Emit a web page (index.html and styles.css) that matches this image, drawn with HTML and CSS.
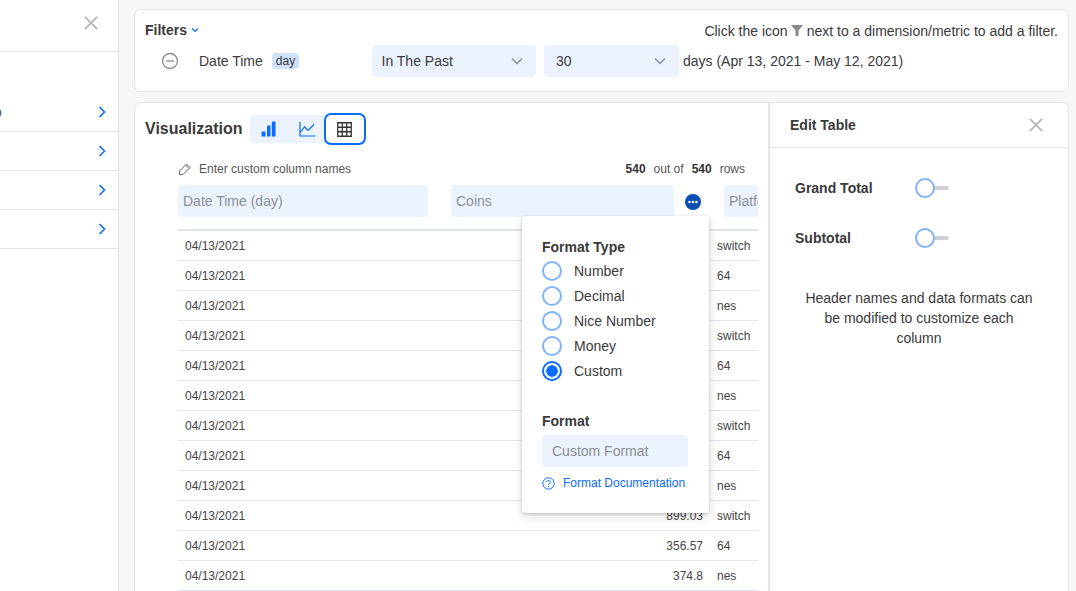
FILE: index.html
```html
<!DOCTYPE html>
<html lang="en">
<head>
<meta charset="utf-8">
<title>Edit Table</title>
<link rel="stylesheet" href="styles.css">
</head>
<body>
<div class="page">
  <aside class="side">
    <div class="side-head">
      <svg class="x-icon" width="14" height="14" viewBox="0 0 16 16"><path d="M1 1l14 14M15 1L1 15"/></svg>
    </div>
    <div class="side-row first"><span class="clip">o</span><svg class="chev" width="8" height="12" viewBox="0 0 8 12"><path d="M1.5 1l5 5-5 5"/></svg></div>
    <div class="side-row"><svg class="chev" width="8" height="12" viewBox="0 0 8 12"><path d="M1.5 1l5 5-5 5"/></svg></div>
    <div class="side-row"><svg class="chev" width="8" height="12" viewBox="0 0 8 12"><path d="M1.5 1l5 5-5 5"/></svg></div>
    <div class="side-row"><svg class="chev" width="8" height="12" viewBox="0 0 8 12"><path d="M1.5 1l5 5-5 5"/></svg></div>
  </aside>
  <main class="main">
    <section class="card filters">
      <div class="filters-top">
        <div class="filters-title">Filters <svg class="mini-chev" width="8" height="6" viewBox="0 0 8 6"><path d="M1 1.5l3 3 3-3"/></svg></div>
        <div class="hint">Click the icon <svg class="funnel" width="12" height="11" viewBox="0 0 12 11"><path d="M0 0h12L7.5 5.5V11h-3V5.500z"/></svg> next to a dimension/metric to add a filter.</div>
      </div>
      <div class="filter-row">
        <svg class="minus" width="18" height="18" viewBox="0 0 18 18"><circle cx="9" cy="9" r="7.500"/><path d="M5 9h8"/></svg>
        <span class="dim">Date Time</span>
        <span class="tag">day</span>
        <div class="select sel-a">In The Past<svg class="sel-chev" width="12" height="8" viewBox="0 0 12 8"><path d="M1 1.500l5 5 5-5"/></svg></div>
        <div class="select sel-b">30<svg class="sel-chev" width="12" height="8" viewBox="0 0 12 8"><path d="M1 1.500l5 5 5-5"/></svg></div>
        <span class="range">days (Apr 13, 2021 - May 12, 2021)</span>
      </div>
    </section>
    <section class="card viz">
      <div class="viz-left">
        <div class="viz-head">
          <h2 class="viz-title">Visualization</h2>
          <div class="type-group">
            <span class="type-btn">
              <svg width="16" height="16" viewBox="0 0 16 16"><path class="blue-fill" d="M.5 11.500a1 1 0 0 1 1-1h3v5h-4zM6 5.500a1 1 0 0 1 1-1h2.500v11H6zM10.800 1.500a1 1 0 0 1 1-1h2.700v15h-3.700z"/></svg>
            </span>
            <span class="type-btn">
              <svg width="17" height="16" viewBox="0 0 17 16"><path class="blue-line" d="M1 1v14h15.500M1.500 11l4-5 3.500 3.500 6-6"/></svg>
            </span>
            <span class="type-btn active">
              <svg width="15" height="15" viewBox="0 0 15 15"><path class="grid-line" d="M.75.75h13.500v13.500H.75zM5.250.75v13.500M9.750.75v13.500M.75 5.250h13.500M.75 9.750h13.500"/></svg>
            </span>
          </div>
        </div>
        <div class="table-area">
          <div class="meta">
            <svg class="pencil" width="14" height="14" viewBox="0 0 14 14"><path d="M1.500 9L8.500 2l3.500 3.500-7 7H1.500zM7.500 3l3.500 3.500"/></svg>
            <span class="meta-label">Enter custom column names</span>
            <span class="count"><b>540</b><span class="out">out of</span><b>540</b><span class="rows-label">rows</span></span>
          </div>
          <div class="col-heads">
            <div class="col-input col-date">Date Time (day)</div>
            <div class="col-input col-coins">Coins</div>
            <svg class="dots" width="16" height="16" viewBox="0 0 16 16"><circle class="dots-bg" cx="8" cy="8" r="8"/><circle class="dot" cx="4.500" cy="8" r="1.300"/><circle class="dot" cx="8" cy="8" r="1.300"/><circle class="dot" cx="11.500" cy="8" r="1.300"/></svg>
            <div class="col-input col-plat">Platform</div>
          </div>
          <div class="rows">
            <div class="row"><span>04/13/2021</span><span class="num"></span><span>switch</span></div>
            <div class="row"><span>04/13/2021</span><span class="num"></span><span>64</span></div>
            <div class="row"><span>04/13/2021</span><span class="num"></span><span>nes</span></div>
            <div class="row"><span>04/13/2021</span><span class="num"></span><span>switch</span></div>
            <div class="row"><span>04/13/2021</span><span class="num"></span><span>64</span></div>
            <div class="row"><span>04/13/2021</span><span class="num"></span><span>nes</span></div>
            <div class="row"><span>04/13/2021</span><span class="num"></span><span>switch</span></div>
            <div class="row"><span>04/13/2021</span><span class="num"></span><span>64</span></div>
            <div class="row"><span>04/13/2021</span><span class="num"></span><span>nes</span></div>
            <div class="row"><span>04/13/2021</span><span class="num">899.03</span><span>switch</span></div>
            <div class="row"><span>04/13/2021</span><span class="num">356.57</span><span>64</span></div>
            <div class="row"><span>04/13/2021</span><span class="num">374.8</span><span>nes</span></div>
          </div>
          <div class="popover">
            <div class="pop-title">Format Type</div>
            <div class="radio-list">
              <div class="radio-item"><span class="radio"></span>Number</div>
              <div class="radio-item"><span class="radio"></span>Decimal</div>
              <div class="radio-item"><span class="radio"></span>Nice Number</div>
              <div class="radio-item"><span class="radio"></span>Money</div>
              <div class="radio-item"><span class="radio on"></span>Custom</div>
            </div>
            <div class="pop-title format-title">Format</div>
            <div class="format-input">Custom Format</div>
            <div class="doc-link">
              <svg width="13" height="13" viewBox="0 0 13 13"><circle cx="6.500" cy="6.500" r="5.700"/><path d="M4.800 5.200c0-2.200 3.500-2.200 3.500-.1 0 1.300-1.800 1.300-1.800 2.700"/><path d="M6.500 9v1"/></svg>
              Format Documentation
            </div>
          </div>
        </div>
      </div>
      <div class="edit">
        <div class="edit-head">
          <span class="edit-title">Edit Table</span>
          <svg class="x-icon" width="14" height="14" viewBox="0 0 16 16"><path d="M1 1l14 14M15 1L1 15"/></svg>
        </div>
        <div class="toggles">
          <div class="toggle-row"><span class="toggle-label">Grand Total</span><span class="toggle"><span class="knob"></span></span></div>
          <div class="toggle-row"><span class="toggle-label">Subtotal</span><span class="toggle"><span class="knob"></span></span></div>
        </div>
        <p class="edit-note">Header names and data formats can be modified to customize each column</p>
      </div>
    </section>
  </main>
</div>
</body>
</html>
```

FILE: styles.css
```css
* { box-sizing: border-box; }
html, body { margin: 0; height: 100%; overflow: hidden; }
body {
  font-family: "Liberation Sans", Arial, sans-serif;
  font-size: 14px;
  color: #3a3a3a;
  background: #f7f7f7;
}
svg { display: block; flex: none; }
.page { display: flex; height: 591px; overflow: hidden; }

.side {
  width: 119px;
  flex: none;
  background: #fff;
  border-right: 1px solid #e3e3e3;
}
.side-head {
  height: 52px;
  border-bottom: 1px solid #e3e3e3;
  display: flex;
  justify-content: flex-end;
  padding: 16px 20px 0 0;
}
.x-icon path { fill: none; stroke: #b4b4b4; stroke-width: 2; }
.side-row {
  height: 39px;
  border-bottom: 1px solid #e3e3e3;
  display: flex;
  align-items: center;
  justify-content: flex-end;
  padding-right: 12px;
  position: relative;
}
.side-row.first { height: 40px; margin-top: 40px; }
.clip { position: absolute; left: -6px; top: 12px; color: #555; }
.chev path { fill: none; stroke: #0a6cff; stroke-width: 1.6; }

.main { flex: 1; min-width: 0; padding: 9px 7px 0 15px; }
.card { background: #fff; border: 1px solid #e6e6e6; border-radius: 7px; }

.filters { height: 83px; padding: 9px 10px 0; margin-bottom: 10px; }
.filters-top { display: flex; justify-content: space-between; align-items: center; height: 21px; }
.filters-title { font-weight: 700; display: flex; align-items: center; gap: 4px; }
.mini-chev path { fill: none; stroke: #0a6cff; stroke-width: 1.200; }
.hint { display: flex; align-items: center; gap: 3.500px; margin-top: 2px; }
.funnel path { fill: #8a8a8a; }
.filter-row { display: flex; align-items: center; height: 32px; margin-top: 5px; padding-left: 16px; }
.minus { margin-right: 20px; }
.minus circle, .minus path { fill: none; stroke: #8c8c8c; stroke-width: 1.300; }
.dim { width: 73px; }
.tag {
  width: 27px; height: 16px;
  background: #cfe2fb; border-radius: 4px;
  font-size: 12px; line-height: 16px; text-align: center;
  margin-right: 73px;
}
.select {
  height: 32px; background: #ebf3fe; border-radius: 4px;
  display: flex; align-items: center; justify-content: space-between;
}
.sel-a { width: 164px; padding: 0 13px 0 9.500px; margin-right: 8px; }
.sel-b { width: 135px; padding: 0 13px 0 12px; margin-right: 4px; }
.sel-chev path { fill: none; stroke: #7f8b99; stroke-width: 1.300; }

.viz { display: flex; height: 520px; overflow: hidden; }
.viz-left { width: 635px; flex: none; padding: 10px 10px 0; border-right: 2px solid #e6e6e6; }
.viz-head { display: flex; align-items: center; height: 32px; }
.viz-title { margin: 0 8px 0 0; font-size: 16px; font-weight: 700; line-height: 32px; width: 97px; }
.type-group { display: flex; align-items: center; background: linear-gradient(#ebf3fe, #ebf3fe) 0 2px / 76px 28px no-repeat; border-radius: 4px; height: 32px; }
.type-btn { width: 38px; height: 32px; display: flex; align-items: center; justify-content: center; }
.type-btn.active { width: 42px; margin-left: -2px; padding-right: 1px; border: 2px solid #0a6cff; border-radius: 7px; background: #fff; }
.blue-fill { fill: #0a6cff; }
.blue-line { fill: none; stroke: #0a6cff; stroke-width: 1.200; }
.grid-line { fill: none; stroke: #333; stroke-width: 1.300; }

.table-area { position: relative; margin-left: 33px; width: 580px; overflow: visible; }
.meta { display: flex; align-items: center; height: 20px; margin-top: 14px; font-size: 12px; color: #555; }
.pencil { margin-right: 7px; }
.pencil path { fill: none; stroke: #666; stroke-width: 1; }
.count { margin-left: auto; margin-right: 13px; display: flex; gap: 8px; }
.count b { color: #333; }
.col-heads { display: flex; align-items: center; height: 32px; margin-top: 6px; overflow: hidden; }
.col-input {
  height: 32px; background: #ebf3fe; border-radius: 4px;
  padding-left: 5px; line-height: 32px; color: #8a8f96; flex: none; white-space: nowrap;
}
.col-date { width: 250px; margin-right: 23px; }
.col-coins { width: 223px; margin-right: 11px; }
.dots { margin-right: 23px; margin-top: 2px; }
.dots-bg { fill: #0a4fb3; }
.dot { fill: #fff; }
.col-plat { width: 80px; }

.rows { margin-top: 12px; border-top: 2px solid #e1e4e8; }
.row {
  display: grid;
  grid-template-columns: 1fr 100px 41px;
  column-gap: 14px;
  height: 30px;
  align-items: center;
  border-bottom: 1px solid #e1e4ea;
  padding-left: 7px;
  font-size: 12px;
  color: #444;
}
.num { text-align: right; }

.popover {
  position: absolute;
  left: 344px; top: 57px;
  width: 187px; height: 297px;
  background: #fff;
  border-radius: 3px;
  box-shadow: 0 1px 3px rgba(0,0,0,.2), 0 4px 12px rgba(0,0,0,.12);
  padding: 22px 20px 0;
  z-index: 2;
}
.pop-title { font-weight: 700; line-height: 18px; }
.radio-list { margin-top: 2px; }
.radio-item { display: flex; align-items: center; height: 25px; }
.radio {
  width: 20px; height: 20px; border-radius: 50%;
  border: 2px solid #7db4ff; margin-right: 12px; background: #fff; flex: none;
}
.radio.on { border-color: #0a6cff; background: radial-gradient(circle, #0a6cff 0 5.500px, #fff 6px); }
.format-title { margin-top: 29px; }
.format-input {
  height: 32px; width: 146px; margin-top: 5px;
  background: #ebf3fe; border-radius: 4px;
  padding-left: 10px; line-height: 32px; color: #8a8f96;
}
.doc-link { display: flex; align-items: center; gap: 8px; margin-top: 8px; font-size: 12px; color: #0a6cff; line-height: 16px; }
.doc-link circle, .doc-link path { fill: none; stroke: #0a6cff; stroke-width: 1; }

.edit { flex: 1; min-width: 0; }
.edit-head {
  height: 45px; border-bottom: 1px solid #e6e6e6;
  display: flex; align-items: center; justify-content: space-between;
  padding: 0 25px 0 20px;
}
.edit-title { font-weight: 700; }
.toggles { padding: 25px 0 0 25px; }
.toggle-row { display: flex; align-items: center; height: 30px; margin-bottom: 20px; }
.toggle-label { width: 120px; font-weight: 700; }
.toggle { position: relative; width: 34px; height: 4px; background: #d0d0d0; border-radius: 2px; }
.knob {
  position: absolute; left: 0; top: -8px;
  width: 20px; height: 20px; border-radius: 50%;
  background: #fff; border: 2px solid #7db4ff;
}
.edit-note { margin: 35px 0 0; padding: 0 33px; text-align: center; line-height: 20px; }
```
